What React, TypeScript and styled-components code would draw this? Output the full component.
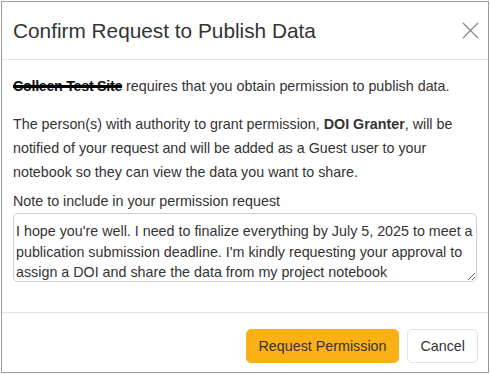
import React, { useState } from 'react';
import styled, { createGlobalStyle } from 'styled-components';

const GlobalStyle = createGlobalStyle`
  html, body {
    margin: 0;
    padding: 0;
    background: #ffffff;
  }
  * {
    box-sizing: border-box;
  }
`;

const Frame = styled.div`
  width: 490px;
  height: 374px;
  padding: 1px;
  background: #ffffff;
`;

const Modal = styled.div`
  height: 100%;
  display: flex;
  flex-direction: column;
  border: 1px solid #9b9b9b;
  background: #ffffff;
  color: #333333;
  font-family: 'Liberation Sans', Arial, sans-serif;
`;

const Header = styled.div`
  height: 58px;
  display: flex;
  align-items: center;
  justify-content: space-between;
  padding: 0 8px 0 11px;
  border-bottom: 1px solid #e3e3e3;
  flex-shrink: 0;
`;

const Title = styled.h1`
  margin: 0;
  font-size: 20.8px;
  font-weight: 400;
  color: #333333;
`;

const CloseButton = styled.button`
  width: 20px;
  height: 20px;
  padding: 0;
  border: none;
  background: none;
  display: flex;
  align-items: center;
  justify-content: center;
  cursor: pointer;
`;

const Body = styled.div`
  flex: 1;
  padding: 14px 11px 0 11px;
  font-size: 14.3px;
  line-height: 24px;
`;

const Paragraph = styled.p<{ $gap: number }>`
  margin: 0 0 ${p => p.$gap}px 0;
`;

const Redacted = styled.span`
  font-weight: 700;
  color: #111111;
  letter-spacing: -0.3px;
  text-decoration: line-through;
  text-decoration-color: #000000;
  text-decoration-thickness: 3px;
`;

const Label = styled.label`
  display: block;
`;

const NoteField = styled.textarea`
  display: block;
  width: 100%;
  height: 69px;
  padding: 7px 2px 5px 2px;
  border: 1px solid #cfcfcf;
  border-radius: 5px;
  font-family: 'Liberation Sans', Arial, sans-serif;
  font-size: 14.3px;
  line-height: 20.5px;
  color: #333333;
  resize: vertical;
  overflow: hidden;
`;

const Footer = styled.div`
  height: 60px;
  display: flex;
  align-items: flex-start;
  justify-content: flex-end;
  gap: 8px;
  padding: 16px 10px 0 0;
  border-top: 1px solid #e3e3e3;
  flex-shrink: 0;
`;

const Button = styled.button<{ $primary?: boolean }>`
  height: 34px;
  padding: 0 12px;
  border-radius: 5px;
  border: 1px solid ${p => (p.$primary ? '#fbb116' : '#e2e2e2')};
  background: ${p => (p.$primary ? '#fbb116' : '#ffffff')};
  color: #333333;
  font-family: 'Liberation Sans', Arial, sans-serif;
  font-size: 14.3px;
  cursor: pointer;
`;

export default function App() {
  const [note, setNote] = useState(
    "I hope you're well. I need to finalize everything by July 5, 2025 to meet a publication submission deadline. I'm kindly requesting your approval to assign a DOI and share the data from my project notebook"
  );

  return (
    <Frame>
      <GlobalStyle />
      <Modal>
        <Header>
          <Title>Confirm Request to Publish Data</Title>
          <CloseButton aria-label="Close">
            <svg width="17" height="17" viewBox="0 0 17 17">
              <path d="M1 1 L16 16 M16 1 L1 16" stroke="#8a8a8a" strokeWidth="1.4" fill="none" />
            </svg>
          </CloseButton>
        </Header>
        <Body>
          <Paragraph $gap={14}>
            <Redacted>Colleen Test Site</Redacted> requires that you obtain permission to publish data.
          </Paragraph>
          <Paragraph $gap={5}>
            The person(s) with authority to grant permission, <strong>DOI Granter</strong>, will be
            notified of your request and will be added as a Guest user to your notebook so they can
            view the data you want to share.
          </Paragraph>
          <Label>Note to include in your permission request</Label>
          <NoteField value={note} onChange={e => setNote(e.target.value)} />
        </Body>
        <Footer>
          <Button $primary>Request Permission</Button>
          <Button>Cancel</Button>
        </Footer>
      </Modal>
    </Frame>
  );
}
